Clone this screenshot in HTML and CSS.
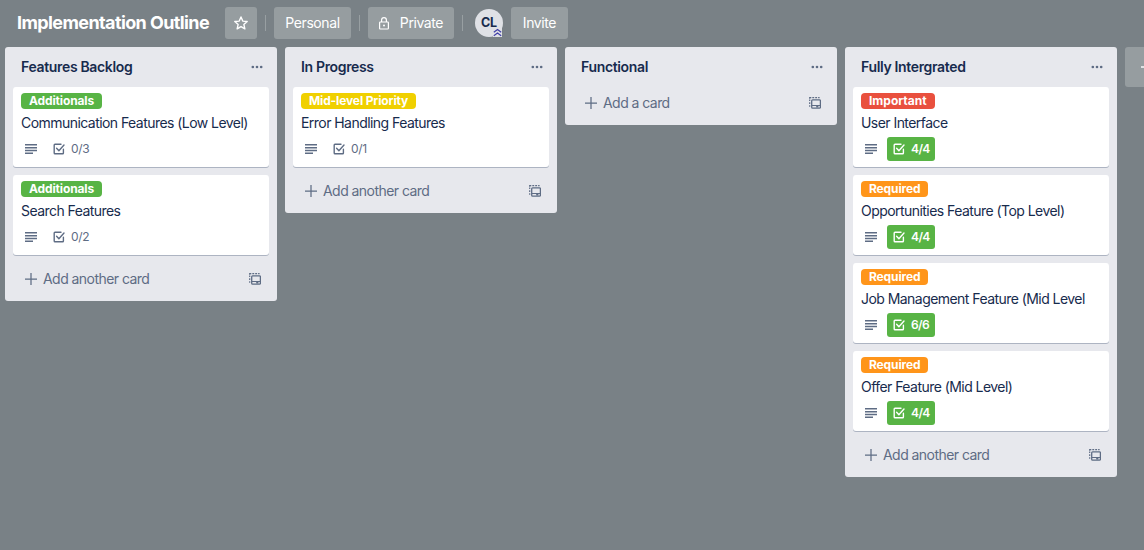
FILE: index.html
```html
<!DOCTYPE html>
<html lang="en">
<head>
<meta charset="utf-8">
<title>Implementation Outline</title>
<link rel="stylesheet" href="styles.css">
</head>
<body>
<svg class="defs" width="0" height="0" aria-hidden="true">
  <symbol id="dots" viewBox="0 0 16 16"><g fill="currentColor"><circle cx="3.2" cy="8" r="1.5"/><circle cx="8" cy="8" r="1.5"/><circle cx="12.8" cy="8" r="1.5"/></g></symbol>
  <symbol id="desc" viewBox="0 0 12 12"><path fill="currentColor" d="M0 1h12v1.4H0zM0 4h12v1.4H0zM0 6.8h12v1.4H0zM0 9.6h8V11H0z"/></symbol>
  <symbol id="check" viewBox="0 0 12 12"><path fill="none" stroke="currentColor" stroke-width="1.4" stroke-linejoin="round" stroke-linecap="round" d="M8 1.2H2Q1.2 1.2 1.2 2v8q0 .8.8.8h7.6q.8 0 .8-.8V6.3M3.6 5.3l2.3 2.4L11 2"/></symbol>
  <symbol id="plus" viewBox="0 0 12 12"><path stroke="currentColor" stroke-width="1.25" d="M6 0v12M0 6h12"/></symbol>
  <symbol id="template" viewBox="0 0 12 12"><path fill="none" stroke="currentColor" stroke-width="1.2" d="M.7 9.8V8.3M.7 7V5.3M.7 4V2.6M.7 1.7V.7h1.6M3.3.7h1.9M6.2.7h1.9M9.1.7h1.5"/><rect x="2.7" y="2.9" width="8.7" height="8.3" rx=".9" fill="none" stroke="currentColor" stroke-width="1.3"/><path fill="currentColor" d="M3 8h8.4v.9H3zM7.2 8.8h2.2v1.6H7.2z"/></symbol>
</svg>
<header class="bar">
  <h1 class="board-name">Implementation Outline</h1>
  <button class="btn star" aria-label="Star"><svg width="14" height="14" viewBox="0 0 14 14"><path fill="none" stroke="currentColor" stroke-width="1.4" stroke-linejoin="round" d="M7 .9l1.75 4.2 4.45.4-3.35 2.95 1 4.4L7 10.55 3.15 12.85l1-4.4L.8 5.5l4.45-.4z"/></svg></button>
  <span class="rule"></span>
  <button class="btn personal">Personal</button>
  <span class="rule"></span>
  <button class="btn private"><svg width="10" height="13" viewBox="0 0 10 13"><path fill="none" stroke="currentColor" stroke-width="1.2" d="M1.4 5h7.2q.8 0 .8.8v5.4q0 .8-.8.8H1.4q-.8 0-.8-.8V5.8q0-.8.8-.8zM2.6 5V3.1a2.4 2.4 0 0 1 4.8 0V5"/><circle cx="5" cy="8.5" r="1" fill="currentColor"/></svg><span>Private</span></button>
  <span class="rule last"></span>
  <span class="avatar">CL<svg width="9" height="9" viewBox="0 0 9 9"><path fill="#dfe1e6" d="M0 0h9v9H0z"/><path fill="none" stroke="#403fa8" stroke-width="1.2" d="M.8 4.2l3.7-2.8 3.7 2.8M.8 7.8L4.5 5l3.7 2.8"/></svg></span>
  <button class="btn invite">Invite</button>
</header>
<main class="board">
  <section class="list">
    <div class="list-head"><h2>Features Backlog</h2><svg class="dots"><use href="#dots"/></svg></div>
    <article class="card"><span class="label green">Additionals</span><p class="title">Communication Features (Low Level)</p><div class="badges"><svg class="desc"><use href="#desc"/></svg><span class="count"><svg><use href="#check"/></svg>0/3</span></div></article>
    <article class="card"><span class="label green">Additionals</span><p class="title">Search Features</p><div class="badges"><svg class="desc"><use href="#desc"/></svg><span class="count"><svg><use href="#check"/></svg>0/2</span></div></article>
    <div class="add"><svg><use href="#plus"/></svg><span class="add-text">Add another card</span><svg><use href="#template"/></svg></div>
  </section>
  <section class="list">
    <div class="list-head"><h2>In Progress</h2><svg class="dots"><use href="#dots"/></svg></div>
    <article class="card"><span class="label yellow">Mid-level Priority</span><p class="title">Error Handling Features</p><div class="badges"><svg class="desc"><use href="#desc"/></svg><span class="count"><svg><use href="#check"/></svg>0/1</span></div></article>
    <div class="add"><svg><use href="#plus"/></svg><span class="add-text">Add another card</span><svg><use href="#template"/></svg></div>
  </section>
  <section class="list">
    <div class="list-head"><h2>Functional</h2><svg class="dots"><use href="#dots"/></svg></div>
    <div class="add"><svg><use href="#plus"/></svg><span class="add-text">Add a card</span><svg><use href="#template"/></svg></div>
  </section>
  <section class="list">
    <div class="list-head"><h2>Fully Intergrated</h2><svg class="dots"><use href="#dots"/></svg></div>
    <article class="card"><span class="label red">Important</span><p class="title">User Interface</p><div class="badges"><svg class="desc"><use href="#desc"/></svg><span class="count done"><svg><use href="#check"/></svg>4/4</span></div></article>
    <article class="card"><span class="label orange">Required</span><p class="title">Opportunities Feature (Top Level)</p><div class="badges"><svg class="desc"><use href="#desc"/></svg><span class="count done"><svg><use href="#check"/></svg>4/4</span></div></article>
    <article class="card"><span class="label orange">Required</span><p class="title">Job Management Feature (Mid Level</p><div class="badges"><svg class="desc"><use href="#desc"/></svg><span class="count done"><svg><use href="#check"/></svg>6/6</span></div></article>
    <article class="card"><span class="label orange">Required</span><p class="title">Offer Feature (Mid Level)</p><div class="badges"><svg class="desc"><use href="#desc"/></svg><span class="count done"><svg><use href="#check"/></svg>4/4</span></div></article>
    <div class="add"><svg><use href="#plus"/></svg><span class="add-text">Add another card</span><svg><use href="#template"/></svg></div>
  </section>
  <div class="add-list"><span class="dash"></span></div>
</main>
</body>
</html>
```
FILE: styles.css
```css
* { box-sizing: border-box; }
body { margin: 0; height: 550px; overflow: hidden; background: #798186; color: #172b4d; font: 14px/20px Inter, "Liberation Sans", sans-serif; letter-spacing: -0.55px; }
h1, h2, p { margin: 0; }
svg { display: block; flex: none; }
.defs { position: absolute; }
.bar { display: flex; align-items: center; height: 47px; padding: 0 0 1px 17px; color: #fff; }
.board-name { width: 208px; font-size: 18px; line-height: 24px; font-weight: 700; letter-spacing: -0.6px; white-space: nowrap; }
.btn { display: flex; align-items: center; justify-content: center; height: 32px; padding: 0; border: 0; border-radius: 3px; background: #969da0; color: #fff; font: inherit; letter-spacing: -0.4px; }
.star { width: 32px; }
.rule { width: 1px; height: 16px; margin: 0 8px; background: #989fa2; }
.personal { width: 77px; }
.private { width: 86px; gap: 11px; }
.rule.last { margin-right: 12px; }
.avatar { position: relative; width: 28px; height: 28px; margin-right: 8px; border-radius: 50%; background: #dfe1e6; color: #172b4d; font-size: 12.5px; line-height: 28px; font-weight: 700; letter-spacing: -0.1px; text-align: center; }
.avatar svg { position: absolute; right: 1px; bottom: 0; }
.invite { width: 57px; }
.board { display: flex; align-items: flex-start; gap: 8px; padding-left: 5px; }
.list { flex: none; width: 272px; padding: 0 8px 6px; border-radius: 3px; background: #e7e8ed; }
.list-head { display: flex; align-items: center; justify-content: space-between; height: 40px; padding: 0 5px 0 8px; }
.list-head h2 { font-size: 14px; line-height: 20px; font-weight: 600; letter-spacing: -0.34px; }
.dots { width: 14px; height: 14px; color: #5e6c84; }
.card { height: 80px; margin-bottom: 8px; padding: 6px 8px 0; border-radius: 3px; background: #fff; box-shadow: 0 1px 0 #adb4c2; }
.label { display: block; width: max-content; height: 16px; padding: 0 8px; border-radius: 4px; color: #fff; font-size: 12px; line-height: 16px; font-weight: 700; letter-spacing: -0.13px; }
.green { background: #58b445; }
.yellow { background: #f0d000; }
.red { background: #e9503e; }
.red.label { letter-spacing: 0; }
.orange { background: #ff951a; }
.title { margin-top: 4px; white-space: nowrap; }
.badges { display: flex; align-items: center; gap: 10px; height: 24px; margin-top: 4px; padding-left: 4px; color: #5e6c84; font-size: 12px; }
.desc { width: 12px; height: 12px; }
.count { display: flex; align-items: center; gap: 6px; width: 48px; height: 24px; padding-left: 6px; border-radius: 3px; letter-spacing: -0.3px; }
.count svg { width: 12px; height: 12px; }
.done { background: #58b445; color: #fff; font-weight: 600; letter-spacing: -0.6px; }
.add { display: flex; align-items: center; height: 32px; padding: 0 8px 0 12px; color: #5e6c84; }
.add svg { width: 12px; height: 12px; }
.add-text { flex: 1; margin-left: 6px; }
.add-list { display: flex; align-items: center; justify-content: flex-end; flex: 1; min-width: 0; height: 40px; border-radius: 3px 0 0 3px; background: #969da0; }
.dash { width: 3px; height: 2px; background: #dfe1e3; }
```
